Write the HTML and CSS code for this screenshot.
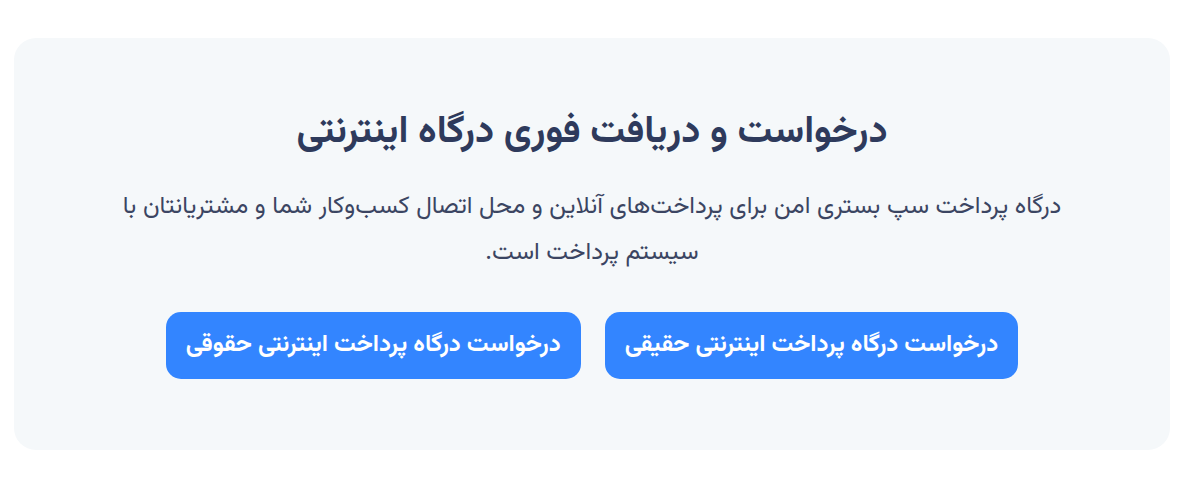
FILE: index.html
```html
<!DOCTYPE html>
<html lang="fa" dir="rtl">
<head>
  <meta charset="UTF-8">
  <meta name="viewport" content="width=device-width, initial-scale=1.0">
  <title>درخواست درگاه پرداخت</title>
  <link rel="stylesheet" href="styles.css">
</head>
<body>
  <section class="gate_box">
    <h2 class="gate_title">درخواست و دریافت فوری درگاه اینترنتی</h2>
    <p class="gate_desc">درگاه پرداخت سپ بستری امن برای پرداخت‌های آنلاین و محل اتصال کسب‌وکار شما و مشتریانتان با سیستم پرداخت است.</p>
    <div class="gate_btns">
      <a href="#" class="btn">درخواست درگاه پرداخت اینترنتی حقیقی</a>
      <a href="#" class="btn">درخواست درگاه پرداخت اینترنتی حقوقی</a>
    </div>
  </section>
</body>
</html>
```

FILE: styles.css
```css
body{
  margin: 0;
  padding: 38px 16px 0 14px;
  background: #fff;
  font-family: "Vazirmatn", "Noto Sans Arabic", "DejaVu Sans", sans-serif;
}
.gate_box{
  background-color: #f5f8fa;
  border-radius: 22px;
  height: 412px;
  box-sizing: border-box;
  padding-top: 73px;
  text-align: center;
}
.gate_title{
  margin: 0;
  font-size: 38.4px;
  font-weight: 700;
  color: #2e3a5c;
  line-height: 44px;
}
.gate_desc{
  max-width: 980px;
  margin: 29px auto 0;
  font-size: 24.5px;
  line-height: 46px;
  color: #3b4562;
}
.gate_btns{
  display: flex;
  justify-content: center;
  gap: 24px;
  margin-top: 36px;
}
.btn{
  display: block;
  background-color: #3385ff;
  color: #fff;
  text-decoration: none;
  font-size: 24px;
  font-weight: 700;
  line-height: 67px;
  padding: 0 20px;
  border-radius: 15px;
}
```
